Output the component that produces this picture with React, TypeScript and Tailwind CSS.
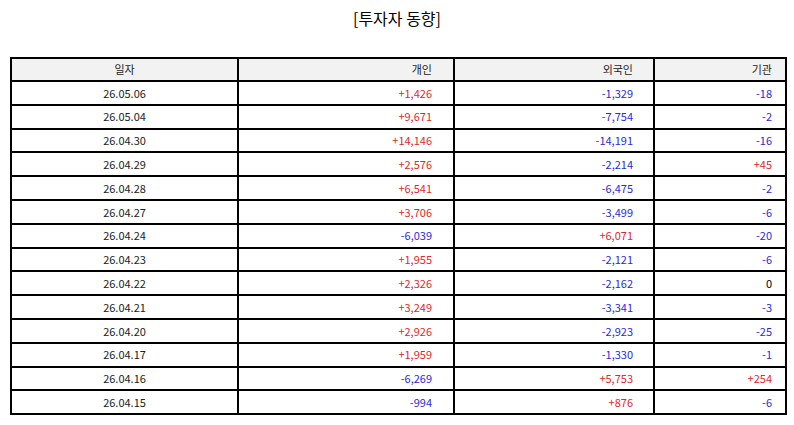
const ROWS: [string, string, string, string][] = [
  ["26.05.06", "+1,426", "-1,329", "-18"],
  ["26.05.04", "+9,671", "-7,754", "-2"],
  ["26.04.30", "+14,146", "-14,191", "-16"],
  ["26.04.29", "+2,576", "-2,214", "+45"],
  ["26.04.28", "+6,541", "-6,475", "-2"],
  ["26.04.27", "+3,706", "-3,499", "-6"],
  ["26.04.24", "-6,039", "+6,071", "-20"],
  ["26.04.23", "+1,955", "-2,121", "-6"],
  ["26.04.22", "+2,326", "-2,162", "0"],
  ["26.04.21", "+3,249", "-3,341", "-3"],
  ["26.04.20", "+2,926", "-2,923", "-25"],
  ["26.04.17", "+1,959", "-1,330", "-1"],
  ["26.04.16", "-6,269", "+5,753", "+254"],
  ["26.04.15", "-994", "+876", "-6"],
];

function tone(v: string) {
  if (v.startsWith("+")) return "text-[#e02828]";
  if (v.startsWith("-")) return "text-[#2a2ad8]";
  return "text-black";
}

export default function App() {
  return (
    <div
      className="w-[794px] h-[425px] bg-white"
      style={{ fontFamily: '"Noto Sans CJK KR", "Noto Sans", sans-serif' }}
    >
      <div className="h-[57px] pt-[5px] text-center text-[16px] leading-[26px] text-black">
        [투자자 동향]
      </div>
      <table className="ml-[10px] w-[775px] table-fixed border-collapse text-[11px] text-[#222]">
        <colgroup>
          <col className="w-[227px]" />
          <col className="w-[216px]" />
          <col className="w-[200px]" />
          <col className="w-[132px]" />
        </colgroup>
        <thead>
          <tr className="h-[23px] bg-[#f2f2f2]">
            <th className="border-2 border-black p-0 text-center font-normal">일자</th>
            <th className="border-2 border-black p-0 pr-[21px] text-right font-normal">개인</th>
            <th className="border-2 border-black p-0 pr-[20px] text-right font-normal">외국인</th>
            <th className="border-2 border-black p-0 pr-[13px] text-right font-normal">기관</th>
          </tr>
        </thead>
        <tbody>
          {ROWS.map(([d, a, b, c]) => (
            <tr key={d} className="h-[23.8px]">
              <td className="border-2 border-black p-0 text-center">{d}</td>
              <td className={`border-2 border-black p-0 pr-[21px] text-right ${tone(a)}`}>{a}</td>
              <td className={`border-2 border-black p-0 pr-[20px] text-right ${tone(b)}`}>{b}</td>
              <td className={`border-2 border-black p-0 pr-[13px] text-right ${tone(c)}`}>{c}</td>
            </tr>
          ))}
        </tbody>
      </table>
    </div>
  );
}
